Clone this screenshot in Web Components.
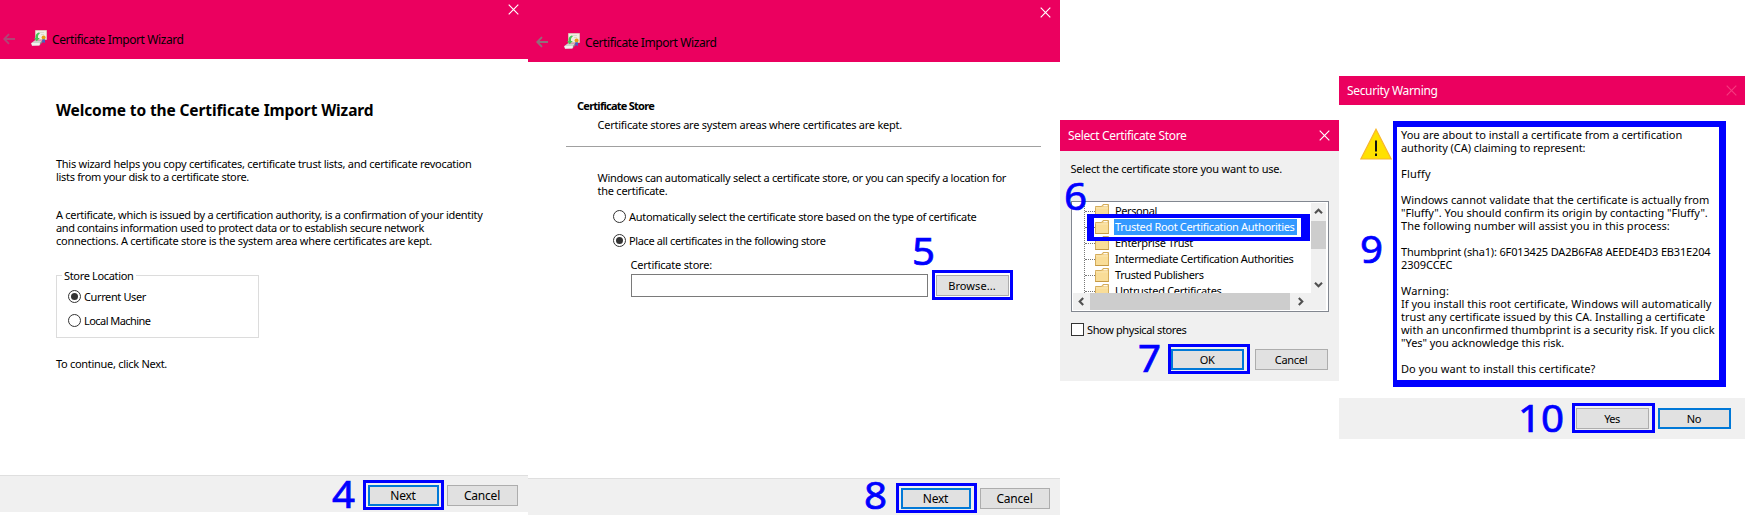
<!DOCTYPE html>
<html lang="en"><head><meta charset="utf-8"><title>Certificate Import</title>
<style>
html,body{margin:0;background:#fff}
body{width:1753px;height:515px;overflow:hidden;font:11px/13px "Noto Sans","Open Sans",sans-serif;color:#000}
</style></head><body>
<cert-desktop></cert-desktop>
<script>
const define=(name,html,setup)=>customElements.define(name,class extends HTMLElement{
  constructor(){super();this.attachShadow({mode:'open'});}
  connectedCallback(){const t=document.createElement('template');t.innerHTML=html;this.shadowRoot.replaceChildren(t.content.cloneNode(true));setup&&setup(this,this.shadowRoot);}
});

/* One line of text, tracked so that it fills the width given in w. */
define('ui-line','<style>:host{display:block;white-space:pre;width:max-content}span{display:inline-block}</style><span><slot></slot></span>',(el,r)=>{
  const w=+el.getAttribute('w'),s=r.querySelector('span');
  if(w){const n=el.textContent.length;const cur=s.getBoundingClientRect().width;s.style.letterSpacing=((w+.5-cur)/n).toFixed(3)+'px';}
});

define('close-glyph','<style>:host{display:block;width:11px;height:11px}svg{display:block}</style><svg width="11" height="11"><path d="M.7.7l9.6 9.6M10.3.7L.7 10.3" stroke="currentColor" stroke-width="1.15" fill="none"/></svg>');

define('cert-icon',`<style>:host{display:block;width:16px;height:16px}svg{display:block}</style>
<svg width="16" height="16" viewBox="0 0 16 16"><path d="M4.500.5h11v9h-11z" fill="#f1eee4" stroke="#d8d0b8" stroke-width=".8"/><path d="M8 2.500h5M10 4.500h3" stroke="#d3cfc0" stroke-width=".7"/><path d="M.3 13L4 10.200h7.500L9 14v1.300l-8 .5z" fill="#cfd3cd"/><path d="M.3 13h8.500l-.6 2.600H1z" fill="#f2f2ee"/><path d="M9 13l2.500-2.800v1.800L9 15z" fill="#8a8d88"/><path d="M7.500 2.500C5 3.500 4.300 5.500 4.600 8L3 8l2.700 3.300L8.800 8H7.100c-.4-2 .1-3.700 1.900-4.800z" fill="#45c455"/><circle cx="12.600" cy="7.600" r="2" fill="#e59d17"/><path d="M11.300 9.300v4l1.200-1.200 1.400 1.200v-4z" fill="#3b68c4"/></svg>`);

define('wizard-bar',`<style>:host{display:flex;flex-direction:column;background:#eb005f;box-sizing:border-box;height:var(--h)}
.c{display:flex;justify-content:flex-end;padding:var(--ct) 9px 0 0;color:#fff;height:11px}
.t{display:flex;align-items:center;height:18px;margin-top:15px;padding-left:var(--l);font-size:12px;line-height:18px}
svg{display:block;color:var(--arrow)}cert-icon{margin:-2px 5px 0 16px}ui-line{margin-top:2px}</style>
<div class="c"><close-glyph></close-glyph></div><div class="t"><svg width="12" height="12"><path d="M6 1.200L1.200 6 6 10.800M1.500 6H12" fill="none" stroke="currentColor" stroke-width="1.800"/></svg><cert-icon></cert-icon><ui-line w="131">Certificate Import Wizard</ui-line></div>`);

define('dialog-bar',`<style>:host{display:flex;align-items:center;justify-content:space-between;background:#eb005f;color:#fff;box-sizing:border-box;height:var(--h);padding:0 var(--pr,9.500px) 0 8px;font-size:12px;line-height:18px}close-glyph{color:var(--x,#fff)}</style><slot></slot><close-glyph></close-glyph>`);

define('ui-button',`<style>:host{display:flex;align-items:center;justify-content:center;box-sizing:border-box;width:var(--w,71px);height:21px;background:#e1e1e1;border:1px solid #adadad;padding-right:1px;font-size:var(--fs,12px)}:host([focus]){border:2px solid #0078d7}</style><slot></slot>`);

define('ui-radio',`<style>:host{display:flex;align-items:center;height:13px;gap:3px}i{width:13px;height:13px;box-sizing:border-box;border:1px solid #333;border-radius:50%;display:grid;place-items:center;background:#fff}:host([on]) i::after{content:"";width:7px;height:7px;border-radius:50%;background:#333}</style><i></i><slot></slot>`);

/* Blue frame and number drawn over a dialog. */
define('step-frame','<style>:host{position:absolute;box-sizing:border-box;border:3px solid #00f;z-index:3}</style>');
define('step-number','<style>:host{position:absolute;z-index:4;color:#00f;font-size:38px;line-height:38px;white-space:nowrap;-webkit-text-stroke:.7px #00f;stroke-linejoin:round;transform:scaleX(1.06);transform-origin:0 0}</style><slot></slot>');

define('tree-item',`<style>:host{display:flex;align-items:center;height:16px;padding-left:12px}
.d{width:10px;border-top:1px dotted #777}svg{display:block}.t{margin-left:5px;padding:0 2px 0 1px;height:16px;line-height:16px}:host([sel]) .t{background:#39f;color:#fff}</style><span class="d"></span><svg width="14" height="14" viewBox="0 0 14 14"><path d="M.5 3.500V2.500h6L8 .5h5.500v13H.5z" fill="#efc977" stroke="#cfa550" stroke-width=".9"/><path d="M8.500 1.700h4" stroke="#fff" stroke-width="1.200"/><path d="M1 4h12v9H1z" fill="#f9dd98"/><path d="M1 3.800h12" stroke="#fff1c4" stroke-width=".9"/><path d="M.2 13.500h13.600" stroke="#c59a45"/></svg><div class="t"><slot></slot></div>`);

define('scroll-arrow','<style>:host{display:grid;place-items:center;width:17px;height:17px}svg{transform:rotate(var(--r,0deg))}</style><svg width="9" height="9"><path d="M1 6.200l3.500-3.500L8 6.200" fill="none" stroke="#505050" stroke-width="2.100"/></svg>');

define('store-list',`<style>:host{display:grid;grid-template:90px 17px/238px 17px;box-sizing:border-box;width:258px;height:111px;border:1px solid #828790;padding:1px;background:#fff}
.v{overflow:hidden;position:relative;height:90px}.v::before{content:"";position:absolute;left:11px;top:0;height:90px;border-left:1px dotted #777}
.sv{background:#f0f0f0;display:flex;flex-direction:column;justify-content:space-between;height:90px;width:15px}.sv scroll-arrow{width:15px}.tv{height:28px;margin:0 0 27px;background:#cdcdcd}
.sh{background:#f0f0f0;display:flex}.th{width:203px;background:#cdcdcd}.sh .r{width:21px;flex:none}.k{background:#f0f0f0;width:15px}</style>
<div class="v"><slot></slot></div><div class="sv"><scroll-arrow></scroll-arrow><div class="tv"></div><scroll-arrow style="--r:180deg"></scroll-arrow></div><div class="sh"><scroll-arrow style="--r:-90deg;flex:none"></scroll-arrow><div class="th"></div><scroll-arrow class="r" style="--r:90deg"></scroll-arrow></div><div class="k"></div>`);

const footer='.f{display:flex;justify-content:flex-end;box-sizing:border-box;background:#f0f0f0;border-top:1px solid #dfdfdf}';

define('welcome-window',`<style>:host{display:flex;flex-direction:column;position:relative;width:528px;height:512px}
.b{flex:1;padding:41px 0 0 56px}h1{margin:0;font-size:15.500px;line-height:20px;font-weight:700}.p{margin-top:37px}.q{margin-top:25px}
.g{position:relative;margin-top:28px;box-sizing:border-box;width:203px;height:63px;border:1px solid #dcdcdc;padding:14px 0 0 11px}.g>ui-line{position:absolute;top:-7px;left:5px;background:#fff;padding:0 2px}
ui-radio+ui-radio{margin-top:11px}.n{margin-top:19px}${footer}.f{height:37px;padding:9px 10px 0;gap:8px}</style>
<wizard-bar style="--h:59px;--ct:4px;--l:3px;--arrow:#b04577"></wizard-bar>
<div class="b"><h1><ui-line w="317">Welcome to the Certificate Import Wizard</ui-line></h1>
<div class="p"><ui-line w="415">This wizard helps you copy certificates, certificate trust lists, and certificate revocation</ui-line><ui-line w="192.500">lists from your disk to a certificate store.</ui-line></div>
<div class="q"><ui-line w="426">A certificate, which is issued by a certification authority, is a confirmation of your identity</ui-line><ui-line w="367.500">and contains information used to protect data or to establish secure network</ui-line><ui-line w="375.500">connections. A certificate store is the system area where certificates are kept.</ui-line></div>
<div class="g"><ui-line w="69">Store Location</ui-line><ui-radio on><ui-line w="61.500">Current User</ui-line></ui-radio><ui-radio><ui-line w="66">Local Machine</ui-line></ui-radio></div>
<div class="n"><ui-line w="110.500">To continue, click Next.</ui-line></div></div>
<div class="f"><ui-button focus><ui-line w="25">Next</ui-line></ui-button><ui-button><ui-line w="35.500">Cancel</ui-line></ui-button></div>
<step-frame style="left:363px;top:480px;width:81px;height:30px"></step-frame><step-number style="left:332px;top:474px">4</step-number>`);

define('store-window',`<style>:host{display:flex;flex-direction:column;position:relative;width:532px;height:515px}
.b{flex:1;padding:37px 0 0}.h{margin-left:49px;font-weight:700}.s{margin:6px 0 0 69.500px}hr{margin:15px 19px 24px 38px;border:0;border-top:1px solid #a0a0a0}
.p{margin-left:69.500px}ui-radio{margin:11px 0 0 85px}.p+ui-radio{margin-top:13px}.l{margin:11px 0 0 102.500px}.i{display:flex;margin:3px 0 0 103px;align-items:center;gap:8px}.i div{box-sizing:border-box;width:297px;height:23px;border:1px solid #7a7a7a}
${footer}.f{height:37px;padding:9px 10px 0;gap:9px}</style>
<wizard-bar style="--h:62px;--ct:7px;--l:8px;--arrow:#8f6f7a"></wizard-bar>
<div class="b"><ui-line class="h" w="76.500">Certificate Store</ui-line><ui-line class="s" w="304">Certificate stores are system areas where certificates are kept.</ui-line><hr>
<div class="p"><ui-line w="408">Windows can automatically select a certificate store, or you can specify a location for</ui-line><ui-line w="69.500">the certificate.</ui-line></div>
<ui-radio><ui-line w="347">Automatically select the certificate store based on the type of certificate</ui-line></ui-radio><ui-radio on><ui-line w="196">Place all certificates in the following store</ui-line></ui-radio>
<ui-line class="l" w="81">Certificate store:</ui-line><div class="i"><div></div><ui-button style="--w:73px;--fs:11px"><ui-line w="47">Browse...</ui-line></ui-button></div></div>
<div class="f"><ui-button focus style="--w:70px"><ui-line w="25">Next</ui-line></ui-button><ui-button style="--w:70px"><ui-line w="35.500">Cancel</ui-line></ui-button></div>
<step-frame style="left:404px;top:270px;width:81px;height:30px"></step-frame><step-number style="left:384px;top:231px">5</step-number>
<step-frame style="left:368px;top:483px;width:81px;height:30px"></step-frame><step-number style="left:336px;top:475px">8</step-number>`);

define('select-window',`<style>:host{display:flex;flex-direction:column;position:relative;width:279px;height:261px;margin-top:120px;background:#f0f0f0}
.m{margin:11px 0 0 10.500px}store-list{margin:26px 0 0 11px}.c{display:flex;align-items:center;gap:3px;margin:11px 0 0 11px}.c i{box-sizing:border-box;width:13px;height:13px;border:1px solid #333;background:#fff}.b{display:flex;justify-content:flex-end;gap:11px;margin:13px 11px 0}</style>
<dialog-bar style="--h:31px"><ui-line w="118">Select Certificate Store</ui-line></dialog-bar>
<ui-line class="m" w="211">Select the certificate store you want to use.</ui-line>
<store-list><tree-item><ui-line w="41.500">Personal</ui-line></tree-item><tree-item sel><ui-line w="179">Trusted Root Certification Authorities</ui-line></tree-item><tree-item><ui-line w="77.500">Enterprise Trust</ui-line></tree-item><tree-item><ui-line w="178">Intermediate Certification Authorities</ui-line></tree-item><tree-item><ui-line w="88">Trusted Publishers</ui-line></tree-item><tree-item><ui-line w="106">Untrusted Certificates</ui-line></tree-item></store-list>
<div class="c"><i></i><ui-line w="99">Show physical stores</ui-line></div>
<div class="b"><ui-button focus style="--w:73px;--fs:11px"><ui-line w="14">OK</ui-line></ui-button><ui-button style="--w:73px;--fs:11px"><ui-line w="32">Cancel</ui-line></ui-button></div>
<step-frame style="left:27px;top:94px;width:223px;height:27px;border-width:4px 9px 4px 7px"></step-frame><step-number style="left:4px;top:56px">6</step-number>
<step-frame style="left:108px;top:224px;width:82px;height:30px"></step-frame><step-number style="left:78px;top:218px">7</step-number>`);

define('warning-window',`<style>:host{display:flex;flex-direction:column;position:relative;width:406px;height:363px;margin-top:76px}
.b{flex:1;display:flex;padding:16px 0 0 21px}svg{display:block;margin:7px 1px 0 0}.t{box-sizing:border-box;width:333px;height:266px;border:solid #00f;border-width:6px 7px 7px 4px;padding:1px 0 0 4px}.t ui-line+ui-line.g{margin-top:13px}
${footer}.f{border:0;height:41px;padding:10px 14px 0;gap:9px}</style>
<dialog-bar style="--h:29px;--x:#f5387f;--pr:8px"><ui-line w="90">Security Warning</ui-line></dialog-bar>
<div class="b"><svg width="32" height="32"><path d="M16 1.200L31.200 31H.8z" fill="#ffe100" stroke="#f8b62d" stroke-width="1.200"/><path d="M16 12.500v11M16 25.500v2.500" stroke="#111" stroke-width="2"/></svg>
<div class="t"><ui-line w="280.700">You are about to install a certificate from a certification</ui-line><ui-line w="184">authority (CA) claiming to represent:</ui-line><ui-line class="g" w="29.300">Fluffy</ui-line><ui-line class="g" w="307.700">Windows cannot validate that the certificate is actually from</ui-line><ui-line w="306.300">"Fluffy". You should confirm its origin by contacting "Fluffy".</ui-line><ui-line w="268.300">The following number will assist you in this process:</ui-line><ui-line class="g" w="309">Thumbprint (sha1): 6F013425 DA2B6FA8 AEEDE4D3 EB31E204</ui-line><ui-line w="51">2309CCEC</ui-line><ui-line class="g" w="47.500">Warning:</ui-line><ui-line w="310">If you install this root certificate, Windows will automatically</ui-line><ui-line w="303.700">trust any certificate issued by this CA. Installing a certificate</ui-line><ui-line w="313">with an unconfirmed thumbprint is a security risk. If you click</ui-line><ui-line w="162.700">"Yes" you acknowledge this risk.</ui-line><ui-line class="g" w="193.700">Do you want to install this certificate?</ui-line></div></div>
<div class="f"><ui-button style="--w:73px;--fs:11px"><ui-line w="15">Yes</ui-line></ui-button><ui-button focus style="--w:73px;--fs:11px"><ui-line w="14">No</ui-line></ui-button></div>
<step-number style="left:21px;top:153px">9</step-number><step-number style="left:179px;top:322px">10</step-number>
<step-frame style="left:233px;top:327px;width:83px;height:30px"></step-frame>`);

define('cert-desktop',`<style>:host{display:flex;align-items:flex-start;width:1753px;height:515px}</style><welcome-window></welcome-window><store-window></store-window><select-window></select-window><warning-window></warning-window>`);
</script></body></html>
